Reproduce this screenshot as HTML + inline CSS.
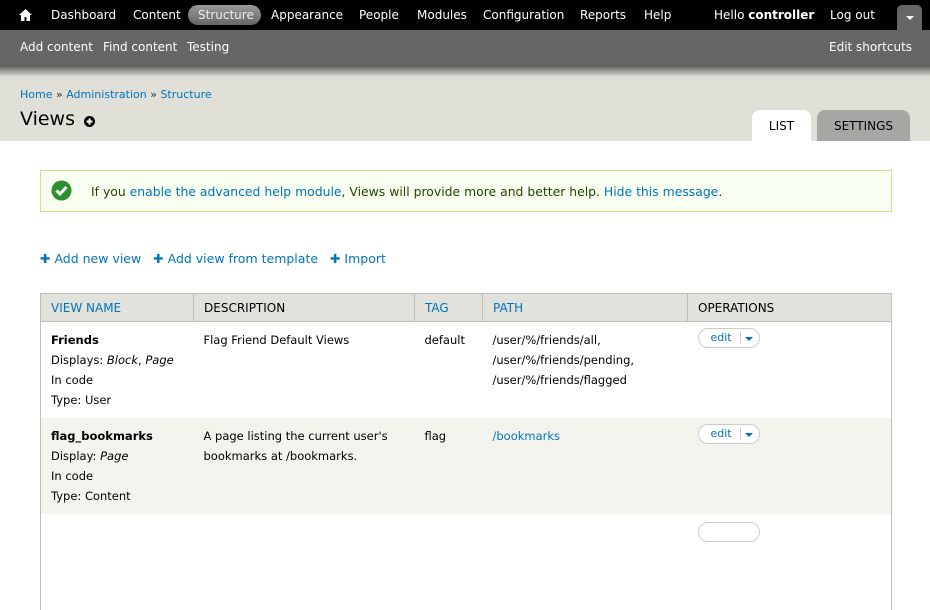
<!DOCTYPE html>
<html><head><style>
*{margin:0;padding:0;box-sizing:border-box}
body{width:930px;height:523px;overflow:hidden;font-family:"DejaVu Sans","Liberation Sans",sans-serif;font-size:12px;color:#000;background:#fff;position:relative}
a{color:#0074bd;text-decoration:none}
.abs{position:absolute;white-space:nowrap}
#top{position:absolute;left:0;top:0;width:930px;height:30px;background:#000;color:#fff}
#top span{position:absolute;top:8px;font-size:12px}
#sc{position:absolute;left:0;top:30px;width:930px;height:35px;background:#666;color:#fff}
#sc span{position:absolute;top:10px;font-size:12px}
#sh{position:absolute;left:0;top:65px;width:930px;height:12px;background:linear-gradient(#555,#e0e0d8)}
#hd{position:absolute;left:0;top:77px;width:930px;height:64px;background:#e0e0d8}
.tab{position:absolute;top:110px;height:31px;border-radius:8px 8px 0 0;font-size:12px;text-align:center;padding-top:9px}
#msg{position:absolute;left:40px;top:170px;width:852px;height:42px;border:1px solid #c6e58e;background:#f8fff0;color:#234600}
table{position:absolute;left:40px;top:293px;width:852px;border-collapse:collapse;font-size:11.5px;border-left:1px solid #bebfb9;border-right:1px solid #bebfb9}
th{background:#e1e2dc;border:1px solid #bebfb9;height:28px;text-align:left;font-weight:normal;padding:0 10px;font-size:12px}
td{vertical-align:top;padding:8px 10px 0;line-height:20px;height:96px}
tr.e td{background:#f3f4ee}
.btn{display:inline-block;width:62px;height:20px;border:1px solid #ccc;border-radius:10px;background:#fff;font-size:11px;position:relative;margin-top:-2px}
.btn a{position:absolute;left:12px;top:2px;line-height:14px}
.btn i{position:absolute;left:41px;top:3px;height:12px;border-left:1px solid #ccc}
.btn b{position:absolute;left:46px;top:8px;border:4px solid transparent;border-top:4px solid #0074bd;border-bottom:0}
</style></head><body>
<div id="top">
<svg style="position:absolute;left:19px;top:9px" width="13" height="12" viewBox="0 0 13 12"><path d="M6.5 0L0 6h2v6h3.5V8h2v4H11V6h2z" fill="#fff"/></svg>
<span style="left:51px">Dashboard</span>
<span style="left:133px">Content</span>
<div style="position:absolute;left:188px;top:5px;width:73px;height:20px;border-radius:10px;background:linear-gradient(#999,#666)"></div>
<span style="left:198px;color:#eee">Structure</span>
<span style="left:271px">Appearance</span>
<span style="left:359px">People</span>
<span style="left:417px">Modules</span>
<span style="left:483px">Configuration</span>
<span style="left:580px">Reports</span>
<span style="left:644px">Help</span>
<span style="left:714px">Hello <b>controller</b></span>
<span style="left:830px">Log out</span>
<div style="position:absolute;left:897px;top:5px;width:25px;height:25px;background:#666;border-radius:5px 5px 0 0"></div>
<div style="position:absolute;left:906px;top:16px;border:4px solid transparent;border-top:4px solid #fff;border-bottom:0"></div>
</div>
<div id="sc"><span style="left:20px">Add content</span><span style="left:103px">Find content</span><span style="left:187px">Testing</span><span style="left:829px">Edit shortcuts</span></div>
<div id="sh"></div>
<div id="hd"></div>
<div class="abs" style="left:20px;top:88px;font-size:11px;color:#333"><a>Home</a> » <a>Administration</a> » <a>Structure</a></div>
<div class="abs" style="left:20px;top:108px;font-size:19px">Views</div>
<svg class="abs" style="left:84px;top:116px" width="11" height="11" viewBox="0 0 11 11"><circle cx="5.5" cy="5.5" r="5.5"/><path d="M2.5 5.5h6M5.5 2.5v6" stroke="#fff" stroke-width="2"/></svg>
<div class="tab" style="left:752px;width:59px;background:#fff">LIST</div>
<div class="tab" style="left:817px;width:93px;background:#a6a7a2">SETTINGS</div>
<div id="msg">
<svg style="position:absolute;left:10px;top:9px" width="21" height="21" viewBox="0 0 21 21"><circle cx="10.5" cy="10.5" r="10" fill="#2e8f2e"/><path d="M5.5 10.5l3.5 3.5 6.5-7" stroke="#fff" stroke-width="3" fill="none"/></svg>
<div class="abs" style="left:50px;top:13px;font-size:12.4px">If you <a>enable the advanced help module</a>, Views will provide more and better help. <a>Hide this message</a>.</div>
</div>
<div class="abs" style="left:40px;top:251px;font-size:12.5px"><a><b>✚</b> Add new view</a>&nbsp;&nbsp;&nbsp;<a><b>✚</b> Add view from template</a>&nbsp;&nbsp;&nbsp;<a><b>✚</b> Import</a></div>
<table>
<tr><th style="width:153px"><a>VIEW NAME</a></th><th style="width:221px">DESCRIPTION</th><th style="width:68px"><a>TAG</a></th><th style="width:205px"><a>PATH</a></th><th>OPERATIONS</th></tr>
<tr><td><b>Friends</b><br>Displays: <i>Block</i>, <i>Page</i><br>In code<br>Type: User</td><td>Flag Friend Default Views</td><td>default</td><td>/user/%/friends/all,<br>/user/%/friends/pending,<br>/user/%/friends/flagged</td><td><span class="btn"><a>edit</a><i></i><b></b></span></td></tr>
<tr class="e"><td><b>flag_bookmarks</b><br>Display: <i>Page</i><br>In code<br>Type: Content</td><td>A page listing the current user's bookmarks at /bookmarks.</td><td>flag</td><td><a>/bookmarks</a></td><td><span class="btn"><a>edit</a><i></i><b></b></span></td></tr>
<tr><td></td><td></td><td></td><td></td><td><span class="btn" style="margin-top:0"></span></td></tr>
</table>
</body></html>
